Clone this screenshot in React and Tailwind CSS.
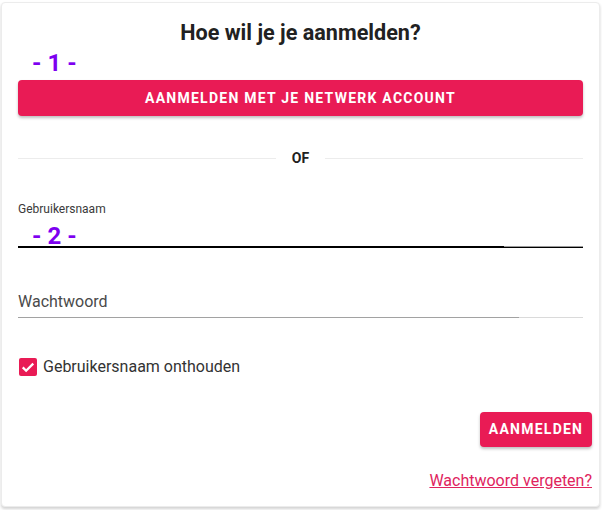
import React from "react";

export default function App() {
  return (
    <div className="w-[602px] h-[510px] bg-white" style={{ fontFamily: "Roboto, 'Liberation Sans', sans-serif" }}>
      <div className="ml-px mt-[2px] w-[599px] h-[505px] bg-white rounded-[4px] border border-[#ececec] shadow-[0_2px_3px_rgba(0,0,0,0.18)] pl-4 pr-4">

        {/* === TITLE === */}
        <h1 className="pt-[16px] h-[44px] leading-7 text-[21.6px] font-bold text-[#212121] text-center">
          Hoe wil je je aanmelden?
        </h1>
        <div className="h-[33px] pl-[14px] text-[24px] leading-[33px] font-bold text-[#7d00f0]">- 1 -</div>

        {/* === NETWORK BUTTON === */}
        <button className="w-full h-9 rounded-[4px] bg-[#e91b55] text-white text-[14px] font-bold tracking-[1.25px] shadow-[0_2px_3px_rgba(0,0,0,0.25)]">
          AANMELDEN MET JE NETWERK ACCOUNT
        </button>

        {/* === DIVIDER === */}
        <div className="mt-8 h-5 flex items-center gap-4">
          <div className="flex-1 h-px bg-[#ececec]" />
          <span className="text-[14px] font-bold text-[#212121] leading-5">OF</span>
          <div className="flex-1 h-px bg-[#ececec]" />
        </div>

        {/* === USERNAME === */}
        <div className="mt-[33px] text-[12px] leading-4 text-[#3a3a3a]">Gebruikersnaam</div>
        <div className="h-[29px] flex items-end pl-[14px]">
          <span className="text-[24px] leading-5 font-bold text-[#7d00f0]">- 2 -</span>
        </div>
        <div className="flex">
          <div className="flex-1 h-[2px] bg-black" />
          <div className="w-[79px] border-t border-[#9a9a9a] border-b border-b-black" />
        </div>

        {/* === PASSWORD === */}
        <div className="mt-[42px] text-[16px] leading-6 text-[#4a4a4a] pb-[3px]">Wachtwoord</div>
        <div className="flex">
          <div className="flex-1 h-px bg-[#a2a2a2]" />
          <div className="w-[64px] h-px bg-[#dadada]" />
        </div>

        {/* === REMEMBER === */}
        <label className="mt-[37px] h-6 flex items-center gap-[6px] pl-[1px]">
          <span className="w-[18px] h-[18px] rounded-[2px] bg-[#e91b55] flex items-center justify-center">
            <svg viewBox="0 0 24 24" className="w-[18px] h-[18px]" fill="none" stroke="white" strokeWidth="3">
              <path d="M5 12.5l4.5 4.5L19 7.5" />
            </svg>
          </span>
          <span className="text-[16px] text-[#333]">Gebruikersnaam onthouden</span>
        </label>

        {/* === SUBMIT === */}
        <div className="mt-[33px] flex justify-end -mr-[9px]">
          <button className="h-[35px] w-[112px] rounded-[4px] bg-[#e91b55] text-white text-[14px] font-bold tracking-[1.25px] shadow-[0_2px_3px_rgba(0,0,0,0.25)]">
            AANMELDEN
          </button>
        </div>

        <div className="mt-[22px] flex justify-end -mr-[9px]">
          <a href="#" className="text-[16px] leading-6 text-[#e0245e] underline">Wachtwoord vergeten?</a>
        </div>
      </div>
    </div>
  );
}
